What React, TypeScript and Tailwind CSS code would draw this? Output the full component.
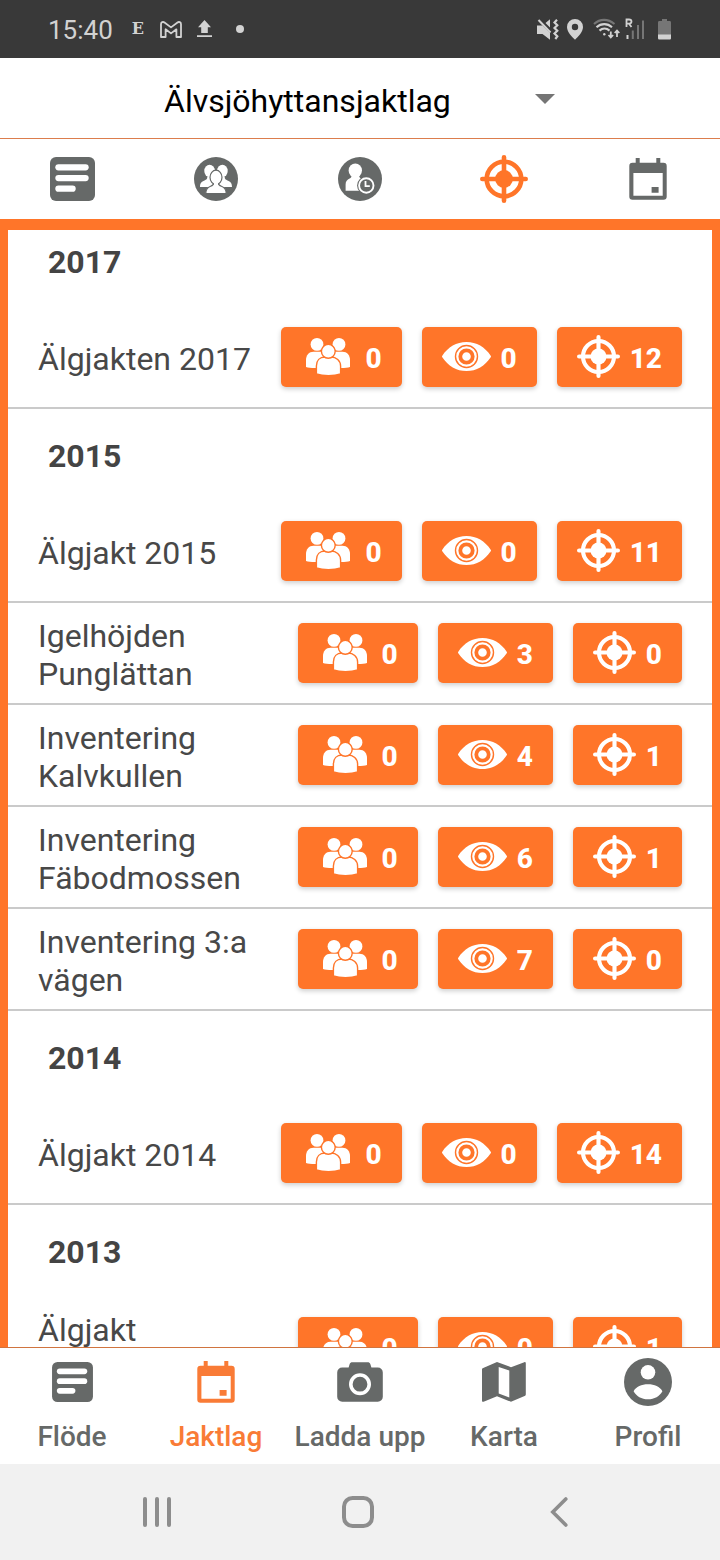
import type { ReactNode } from "react";

type IconProps = { className?: string };

function ListIcon({ className }: IconProps) {
  return (
    <svg viewBox="0 0 45 44" className={className} aria-hidden="true">
      <rect width="45" height="44" rx="6" fill="currentColor" />
      <rect x="5.3" y="7.2" width="33.4" height="6.2" rx="3.1" fill="#fff" />
      <rect x="5.3" y="18" width="33.4" height="6.2" rx="3.1" fill="#fff" />
      <rect x="5.3" y="28.6" width="20.4" height="6.2" rx="3.1" fill="#fff" />
    </svg>
  );
}

function GroupIcon({ className }: IconProps) {
  return (
    <svg viewBox="0 0 44 44" className={className} aria-hidden="true">
      <circle cx="22" cy="22" r="22" fill="currentColor" />
      <g fill="#fff">
        <ellipse cx="15.6" cy="14" rx="5.3" ry="6.2" />
        <ellipse cx="28.4" cy="14" rx="5.3" ry="6.2" />
        <path d="M6 30c0-4 1.500-5.500 4.500-6.600 2-.8 2.800-1.400 2.800-3.400h5l3 10z" />
        <path d="M38 30c0-4-1.500-5.500-4.500-6.600-2-.8-2.800-1.400-2.800-3.400h-5l-3 10z" />
      </g>
      <path
        d="M11.800 36.600c0-4.600 1.700-6.200 4.800-7.300 2.200-.8 3-1.300 3-3.300h4.800c0 2 .8 2.500 3 3.300 3.100 1.100 4.800 2.700 4.800 7.300z"
        fill="#fff"
        stroke="currentColor"
        strokeWidth="1.200"
      />
      <ellipse cx="22" cy="20.300" rx="6" ry="7.100" fill="#fff" stroke="currentColor" strokeWidth="1.200" />
      <path d="M20 24.500h4v5h-4z" fill="#fff" />
    </svg>
  );
}

function PersonClockIcon({ className }: IconProps) {
  return (
    <svg viewBox="0 0 44 44" className={className} aria-hidden="true">
      <circle cx="22" cy="22" r="22" fill="currentColor" />
      <ellipse cx="17.300" cy="13.500" rx="6.700" ry="6.900" fill="#fff" />
      <path d="M7.600 33.800V27.500c0-3.200 1.600-4.900 4-6 1.500-.7 2-1.500 2-3.500h7.500c0 2 .6 2.800 2 3.400l6 3v9.400z" fill="#fff" />
      <circle cx="28.300" cy="28.500" r="9.200" fill="currentColor" />
      <circle cx="28.300" cy="28.500" r="7.200" fill="none" stroke="#fff" strokeWidth="1.900" />
      <path d="M27.500 24v5.200h4.300" fill="none" stroke="#fff" strokeWidth="1.800" />
    </svg>
  );
}

function TargetIcon({ className }: IconProps) {
  return (
    <svg viewBox="0 0 48 48" className={className} aria-hidden="true">
      <circle cx="24" cy="24" r="17.300" fill="none" stroke="currentColor" strokeWidth="4.600" />
      <circle cx="24" cy="24" r="8.900" fill="currentColor" />
      <path d="M24 2.300v43.400M2.300 24h43.400" stroke="currentColor" strokeWidth="4.600" strokeLinecap="round" />
    </svg>
  );
}

function CalendarIcon({ className }: IconProps) {
  return (
    <svg viewBox="0 0 38 42" className={className} aria-hidden="true" fill="currentColor">
      <path fillRule="evenodd" d="M3.500 4.700h31a3.200 3.200 0 0 1 3.200 3.200v30.600a3.200 3.200 0 0 1-3.200 3.200h-31A3.200 3.200 0 0 1 .3 38.500V7.900a3.200 3.200 0 0 1 3.200-3.200zM4.400 15v22.700h29.300V15z" />
      <path d="M6.700 0h4v6h-4zM27.300 0h4v6h-4zM22.600 29h7v5.700h-7z" />
    </svg>
  );
}

function CameraIcon({ className }: IconProps) {
  return (
    <svg viewBox="0 0 46 40" className={className} aria-hidden="true">
      <path
        fill="currentColor"
        d="M15.500.3h15c1.600 0 2.300.6 2.900 2l1 3.200h6.400a5 5 0 0 1 5 5v24.200a5 5 0 0 1-5 5H5.200a5 5 0 0 1-5-5V10.500a5 5 0 0 1 5-5h6.400l1-3.200c.6-1.400 1.300-2 2.900-2z"
      />
      <circle cx="23" cy="22.200" r="9.200" fill="none" stroke="#fff" strokeWidth="3.600" />
    </svg>
  );
}

function MapIcon({ className }: IconProps) {
  return (
    <svg viewBox="0 0 44 40" className={className} aria-hidden="true">
      <path
        fill="currentColor"
        fillRule="evenodd"
        d="M0 7.500C0 6.600.4 6.200 1.200 5.900L15 0l14 5.200L42.300.2c.9-.3 1.500 0 1.500 1v31c0 .9-.3 1.400-1.200 1.700L29 39.800l-14-5.600-13.400 5.500c-1 .4-1.600 0-1.600-1zM16.700 5v26.500l10.600 3.900V8.500z"
      />
    </svg>
  );
}

function ProfileIcon({ className }: IconProps) {
  return (
    <svg viewBox="0 0 48 48" className={className} aria-hidden="true">
      <circle cx="24" cy="24" r="24" fill="currentColor" />
      <circle cx="24" cy="14.300" r="7.300" fill="#fff" />
      <path d="M9.600 33.200c2.400-4.300 8-6.900 14.400-6.900s12 2.600 14.400 6.900c-2.600 4.900-8 8.100-14.400 8.100s-11.800-3.200-14.400-8.100z" fill="#fff" />
    </svg>
  );
}

function PeopleIcon() {
  return (
    <svg viewBox="0 0 44 37" className="mx-[5px] mb-0.5 h-[37px] w-11" fill="#fff" aria-hidden="true">
      <circle cx="11" cy="6.400" r="6.400" />
      <circle cx="33" cy="6.400" r="6.400" />
      <path d="M0 29V22c0-5 3-8.300 7.500-8.300H18V30H9C5 30 2 29.800 0 29z" />
      <path d="M44 29V22c0-5-3-8.300-7.500-8.300H26V30h9c4 0 7-.2 9-1z" />
      <g stroke="#ff7529" strokeWidth="1.400">
        <path d="M10.400 36V28c0-5.500 3.400-9 8.600-9h6c5.200 0 9.600 3.500 9.600 9v8c-3.500 1.200-7.500 1.700-12.100 1.700S13.900 37.200 10.400 36z" />
        <circle cx="22.300" cy="13.300" r="6.900" />
      </g>
    </svg>
  );
}

function EyeIcon() {
  return (
    <svg viewBox="0 0 49 29" className="mb-0.5 h-[29px] w-[49px]" aria-hidden="true">
      <path d="M.3 15.200C-.1 14.700-.1 14.200.3 13.700 6 5 14.500 0 24.500 0S43 5 48.700 13.700c.4.500.4 1 0 1.500C43 24 34.500 29 24.500 29S6 24 .3 15.200z" fill="#fff" />
      <circle cx="24.500" cy="14.500" r="11" fill="none" stroke="#ff7529" strokeWidth="1.400" />
      <circle cx="24.500" cy="14.500" r="6.200" fill="none" stroke="#ff7529" strokeWidth="3.800" />
    </svg>
  );
}

function StatusBar() {
  return (
    <div className="flex h-[58px] shrink-0 items-center justify-between bg-[#393939] px-12 text-[#d2d2d2]">
      <div className="flex items-center">
        <span className="pt-0.5 text-[26px] leading-8">15:40</span>
        <span className="ml-[19px] font-['DejaVu_Serif',serif] text-[16px] leading-5 font-black">E</span>
        <svg viewBox="0 0 22 17" className="ml-4 h-[17px] w-[22px]" fill="none" stroke="currentColor" strokeWidth="1.800" strokeLinejoin="round" aria-hidden="true">
          <path d="M1 3.200c0-2 2-2.800 3.500-1.700L11 6.400l6.500-4.900C19 .4 21 1.200 21 3.200V16h-4.600V8.300L11 12.400 5.600 8.300V16H1z" />
        </svg>
        <svg viewBox="0 0 15 18" className="ml-[15px] h-[18px] w-[15px]" fill="currentColor" aria-hidden="true">
          <path d="M7.500 0 14 7.200h-3.200V13H4.200V7.200H1zM0 15.200h15V17H0z" />
        </svg>
        <span className="ml-6 size-2 rounded-full bg-current" />
      </div>
      <div className="flex items-center">
        <svg viewBox="0 0 22 21" className="h-[21px] w-[22px]" fill="currentColor" aria-hidden="true">
          <path d="M0 6.500h5.500L13 14v6.800L5.500 15H0zM8.500 4 13 .3V8.500z" />
          <path d="M1.500 1l12 12.500" stroke="currentColor" strokeWidth="2" />
          <path d="M20 .8 17.500 3.500l2.800 2.800-2.800 2.700 2.800 2.800-2.800 2.700 2.800 2.800-2 2.700" fill="none" stroke="currentColor" strokeWidth="2.200" />
        </svg>
        <svg viewBox="0 0 16 21" className="ml-2 h-[21px] w-4" aria-hidden="true">
          <path fill="currentColor" fillRule="evenodd" d="M8 0a8 8 0 0 1 8 8c0 5-5 9.800-8 12.800C5 17.800 0 13 0 8a8 8 0 0 1 8-8zm0 4.800a3.200 3.200 0 1 0 0 6.400 3.200 3.200 0 0 0 0-6.400z" />
        </svg>
        <svg viewBox="0 0 28 22" className="ml-2.5 h-[22px] w-7" fill="none" stroke="currentColor" strokeWidth="2.100" aria-hidden="true">
          <path d="M1 6C7 .500 15 .500 21.500 6" opacity=".4" />
          <path d="M3.500 9.300c4.500-4.200 11-4.200 15.500 0M6.500 12.600c3-2.700 7-2.700 10 0" />
          <circle cx="11.300" cy="16.200" r="1.200" fill="currentColor" stroke="none" />
          <path d="M17.800 13.500v6M15.500 17l2.300 2.500 2.300-2.500M24 19v-6.500M21.700 15l2.300-2.500 2.300 2.500" strokeWidth="1.800" />
        </svg>
        <svg viewBox="0 0 19 22" className="ml-1 h-[22px] w-[19px]" fill="none" stroke="currentColor" strokeWidth="1.800" aria-hidden="true">
          <path d="M1.500 9V1.500H4c3.300 0 3.300 4.200 0 4.200H1.500M4 5.700 6.500 9" />
          <path d="M2.500 17v4" strokeWidth="2" />
          <path d="M7.800 12.500V21M13 7v14M18 2.500V21" opacity=".4" strokeWidth="2" />
        </svg>
        <svg viewBox="0 0 13 21" className="mr-px ml-3.5 h-[21px] w-[13px]" aria-hidden="true">
          <path d="M4 0h5v2h2.500c1 0 1.500.5 1.500 1.500V16H0V3.500C0 2.500.5 2 1.500 2H4z" fill="#767676" />
          <path d="M0 15.500h13V19c0 1-.5 1.500-1.500 1.500h-10C.5 20.500 0 20 0 19z" fill="currentColor" />
        </svg>
      </div>
    </div>
  );
}

const tabs: { label: string; icon: ReactNode; active?: boolean }[] = [
  { label: "Flöde", icon: <ListIcon className="h-11 w-[45px]" /> },
  { label: "Medlemmar", icon: <GroupIcon className="size-11" /> },
  { label: "Pass", icon: <PersonClockIcon className="size-11" /> },
  { label: "Jakter", icon: <TargetIcon className="size-12" />, active: true },
  { label: "Kalender", icon: <CalendarIcon className="h-[42px] w-[38px]" /> },
];

const navItems: { label: string; icon: ReactNode; active?: boolean }[] = [
  { label: "Flöde", icon: <ListIcon className="h-10 w-[41px]" /> },
  { label: "Jaktlag", icon: <CalendarIcon className="h-[42px] w-[38px]" />, active: true },
  { label: "Ladda upp", icon: <CameraIcon className="h-10 w-[46px]" /> },
  { label: "Karta", icon: <MapIcon className="h-10 w-11" /> },
  { label: "Profil", icon: <ProfileIcon className="size-12" /> },
];

type Hunt = { name: string; people: number; seen: number; shot: number };

const years: { year: number; hunts: Hunt[] }[] = [
  { year: 2017, hunts: [{ name: "Älgjakten 2017", people: 0, seen: 0, shot: 12 }] },
  {
    year: 2015,
    hunts: [
      { name: "Älgjakt 2015", people: 0, seen: 0, shot: 11 },
      { name: "Igelhöjden Punglättan", people: 0, seen: 3, shot: 0 },
      { name: "Inventering Kalvkullen", people: 0, seen: 4, shot: 1 },
      { name: "Inventering Fäbodmossen", people: 0, seen: 6, shot: 1 },
      { name: "Inventering 3:a vägen", people: 0, seen: 7, shot: 0 },
    ],
  },
  { year: 2014, hunts: [{ name: "Älgjakt 2014", people: 0, seen: 0, shot: 14 }] },
  { year: 2013, hunts: [{ name: "Älgjakt\n\u00a0", people: 0, seen: 0, shot: 1 }] },
];

function CountButton({ icon, count }: { icon: ReactNode; count: number }) {
  return (
    <button
      type="button"
      className="flex h-[60px] items-center gap-2.5 rounded-[5px] bg-[#ff7529] px-5 text-[28px] leading-9 font-extrabold text-white shadow-[0_2px_5px_rgba(0,0,0,0.2)]"
    >
      {icon}
      <span className="pt-1">{count}</span>
    </button>
  );
}

function HuntRow({ hunt }: { hunt: Hunt }) {
  return (
    <li className="flex items-center gap-5 border-b-2 border-[#cacaca] px-[30px] py-2.5">
      <span className="min-w-0 flex-1 pt-1 text-[32px] leading-[38px] whitespace-pre-line text-[#484848]">{hunt.name}</span>
      <div className="my-2.5 flex shrink-0 gap-5">
        <CountButton icon={<PeopleIcon />} count={hunt.people} />
        <CountButton icon={<EyeIcon />} count={hunt.seen} />
        <CountButton icon={<TargetIcon className="mb-0.5 size-[43px]" />} count={hunt.shot} />
      </div>
    </li>
  );
}

export default function App() {
  return (
    <div className="flex h-screen flex-col bg-white font-[Roboto,sans-serif]">
      <StatusBar />

      <header className="flex shrink-0 justify-center border-b border-[#dc7d4d] py-3">
        <div className="relative w-3/5">
          <select
            aria-label="Jaktlag"
            className="h-14 w-full appearance-none bg-transparent px-5 pt-1.5 text-[32px] leading-10 text-black outline-none"
          >
            <option>Älvsjöhyttansjaktlag</option>
          </select>
          <svg viewBox="0 0 20 10" className="pointer-events-none absolute top-6 right-[21px] h-2.5 w-5" aria-hidden="true">
            <path d="M0 0h20L10 10z" fill="#757575" />
          </svg>
        </div>
      </header>

      <nav aria-label="Jaktlagsflikar" className="grid h-20 shrink-0 grid-cols-5">
        {tabs.map((tab) => (
          <button
            key={tab.label}
            type="button"
            aria-label={tab.label}
            className={tab.active ? "flex items-center justify-center text-[#ff7529]" : "flex items-center justify-center text-[#666968]"}
          >
            {tab.icon}
          </button>
        ))}
      </nav>

      <main className="min-h-0 flex-1 overflow-y-auto border-x-8 border-t-[11px] border-[#ff7529] [scrollbar-width:none]">
        {years.map((group, index) => (
          <section key={group.year}>
            <h2
              className={
                index === 0
                  ? "px-10 pt-[13px] pb-[26px] text-[32px] leading-[38px] font-bold text-[#444]"
                  : "px-10 pt-7 pb-[26px] text-[32px] leading-[38px] font-bold text-[#444]"
              }
            >
              {group.year}
            </h2>
            <ul>
              {group.hunts.map((hunt) => (
                <HuntRow key={hunt.name} hunt={hunt} />
              ))}
            </ul>
          </section>
        ))}
      </main>

      <nav aria-label="Huvudmeny" className="grid shrink-0 grid-cols-5 border-t border-[#d0743f] bg-white pt-2.5 pb-[9px]">
        {navItems.map((item) => (
          <a
            key={item.label}
            href="#"
            aria-current={item.active ? "page" : undefined}
            className={item.active ? "flex flex-col items-center gap-[13px] text-[#f97b36]" : "flex flex-col items-center gap-[13px] text-[#666968]"}
          >
            <span className="flex h-12 items-center">{item.icon}</span>
            <span className="text-[28px] leading-9 font-medium whitespace-nowrap">{item.label}</span>
          </a>
        ))}
      </nav>

      <div className="grid h-24 shrink-0 grid-cols-3 bg-[#f1f1f1] pr-[60px] pl-14 text-[#8d8d8d]">
        <button type="button" aria-label="Senaste appar" className="flex items-center justify-center">
          <svg viewBox="0 0 28 30" className="h-[30px] w-7" stroke="currentColor" strokeWidth="4" strokeLinecap="round" aria-hidden="true">
            <path d="M2 2v26M14 2v26M26 2v26" />
          </svg>
        </button>
        <button type="button" aria-label="Hem" className="flex items-center justify-center">
          <svg viewBox="0 0 32 32" className="size-8" fill="none" stroke="currentColor" strokeWidth="4" aria-hidden="true">
            <rect x="2" y="2" width="28" height="28" rx="8.500" />
          </svg>
        </button>
        <button type="button" aria-label="Tillbaka" className="flex items-center justify-center">
          <svg viewBox="0 0 18 30" className="h-[30px] w-[18px]" fill="none" stroke="currentColor" strokeWidth="3.600" strokeLinecap="round" aria-hidden="true">
            <path d="M15.800 2 2.800 15l13 13" />
          </svg>
        </button>
      </div>
    </div>
  );
}
